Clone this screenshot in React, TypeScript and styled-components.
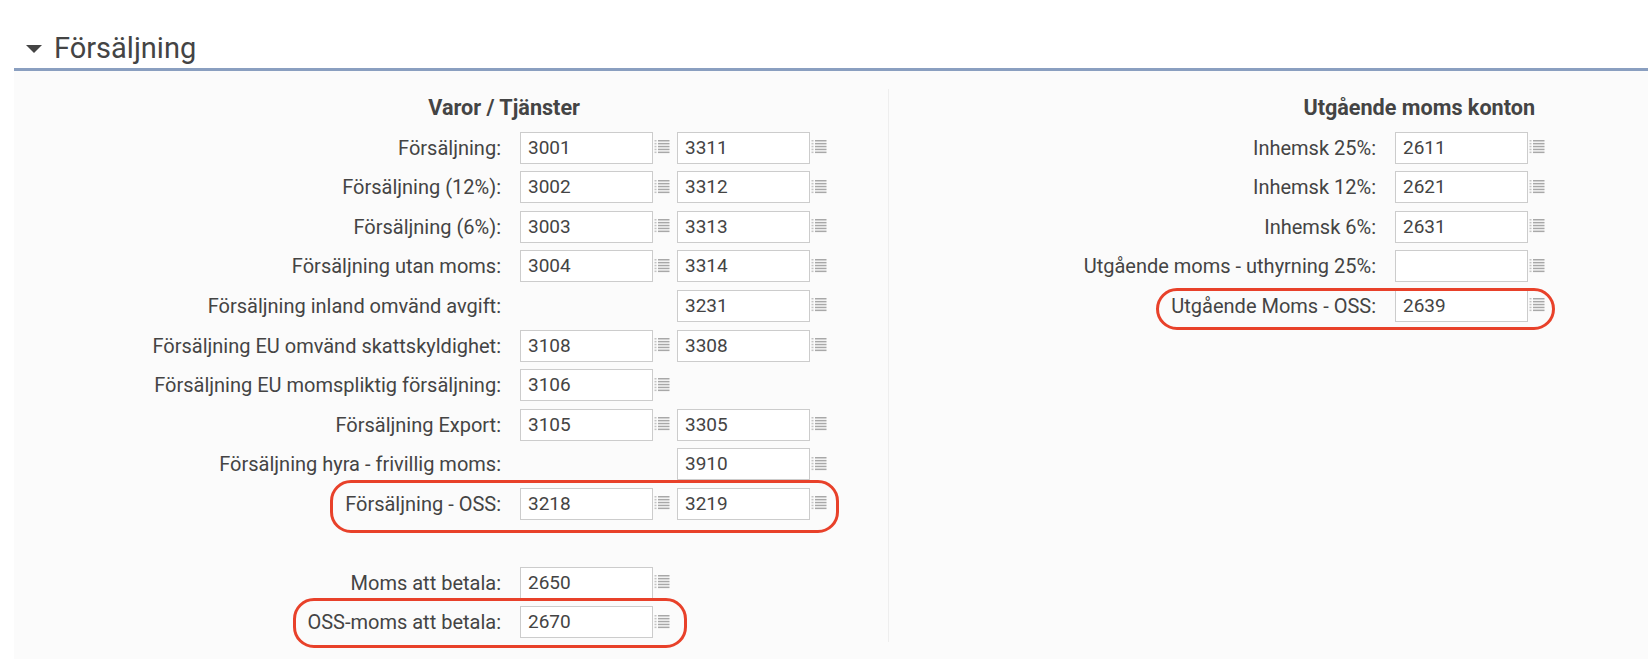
import React from 'react';
import styled, { createGlobalStyle } from 'styled-components';

const Global = createGlobalStyle`
  html, body {
    margin: 0;
    padding: 0;
    background: #fff;
    font-family: Roboto, 'Liberation Sans', sans-serif;
    color: #444;
  }
`;

const Page = styled.div`
  width: 1648px;
  height: 664px;
  padding: 27px 0 0 14px;
  box-sizing: border-box;
  position: relative;
  overflow: hidden;
`;

const SectionHeader = styled.div`
  display: flex;
  align-items: center;
  gap: 12px;
  height: 41px;
  padding-left: 12px;
  border-bottom: 3px solid #8a9fc0;
`;

const Arrow = styled.span`
  width: 0;
  height: 0;
  margin-top: 2px;
  border-left: 8.5px solid transparent;
  border-right: 8.5px solid transparent;
  border-top: 8px solid #444;
`;

const SectionTitle = styled.h2`
  margin: 0;
  font-size: 29px;
  font-weight: 400;
  color: #444;
`;

const Panel = styled.div`
  display: flex;
  height: 588px;
  padding-top: 18px;
  box-sizing: border-box;
  background: #fbfbfb;
`;

const Column = styled.div<{ $width: number; $divider?: boolean }>`
  width: ${(p) => p.$width}px;
  height: 553px;
  flex: none;
  box-sizing: border-box;
  border-right: ${(p) => (p.$divider ? '1px solid #eee' : 'none')};
`;

const Heading = styled.div<{ $right: number }>`
  height: 39px;
  line-height: 37px;
  padding-right: ${(p) => p.$right}px;
  text-align: right;
  font-size: 21.6px;
  font-weight: 700;
  color: #444;
`;

const Row = styled.div<{ $labelWidth: number }>`
  display: grid;
  grid-template-columns: ${(p) => p.$labelWidth}px 157px 157px;
  height: 39.55px;
  align-items: center;
`;

const Label = styled.div`
  padding-right: 19px;
  text-align: right;
  font-size: 20px;
  white-space: nowrap;
  color: #444;
`;

const Field = styled.div`
  display: flex;
  align-items: center;
`;

const Input = styled.div`
  width: 133px;
  height: 32px;
  box-sizing: border-box;
  padding-left: 7px;
  background: #fff;
  border: 1px solid #ccc;
  font-size: 19px;
  line-height: 30px;
  color: #444;
`;

const IconSvg = styled.svg`
  margin: -2px 0 0 1px;
  flex: none;
`;

const ListIcon = () => (
  <IconSvg viewBox="0 0 16 15" width="16" height="15">
    {[1, 3.9, 6.8, 9.7, 12.6].map((y) => (
      <g key={y}>
        <rect x="0.5" y={y} width="2" height="1.5" fill="#c4c4c4" />
        <rect x="4" y={y} width="11.5" height="1.5" fill="#a8a8a8" />
      </g>
    ))}
  </IconSvg>
);

const Highlight = styled.div<{ $x: number; $y: number; $w: number; $h: number }>`
  position: absolute;
  left: ${(p) => p.$x}px;
  top: ${(p) => p.$y}px;
  width: ${(p) => p.$w}px;
  height: ${(p) => p.$h}px;
  box-sizing: border-box;
  border: 3px solid #e8412a;
  border-radius: 21px;
  pointer-events: none;
`;

type RowData = { label: string; a?: string; b?: string };

const Account = ({ value }: { value?: string }) =>
  value === undefined ? (
    <div />
  ) : (
    <Field>
      <Input>{value}</Input>
      <ListIcon />
    </Field>
  );

const leftRows: RowData[] = [
  { label: 'Försäljning:', a: '3001', b: '3311' },
  { label: 'Försäljning (12%):', a: '3002', b: '3312' },
  { label: 'Försäljning (6%):', a: '3003', b: '3313' },
  { label: 'Försäljning utan moms:', a: '3004', b: '3314' },
  { label: 'Försäljning inland omvänd avgift:', b: '3231' },
  { label: 'Försäljning EU omvänd skattskyldighet:', a: '3108', b: '3308' },
  { label: 'Försäljning EU momspliktig försäljning:', a: '3106' },
  { label: 'Försäljning Export:', a: '3105', b: '3305' },
  { label: 'Försäljning hyra - frivillig moms:', b: '3910' },
  { label: 'Försäljning - OSS:', a: '3218', b: '3219' },
  { label: '' },
  { label: 'Moms att betala:', a: '2650' },
  { label: 'OSS-moms att betala:', a: '2670' },
];

const rightRows: RowData[] = [
  { label: 'Inhemsk 25%:', a: '2611' },
  { label: 'Inhemsk 12%:', a: '2621' },
  { label: 'Inhemsk 6%:', a: '2631' },
  { label: 'Utgående moms - uthyrning 25%:', a: '' },
  { label: 'Utgående Moms - OSS:', a: '2639' },
];

export default function App() {
  return (
    <Page>
      <Global />
      <SectionHeader>
        <Arrow />
        <SectionTitle>Försäljning</SectionTitle>
      </SectionHeader>
      <Panel>
        <Column $width={875} $divider>
          <Heading $right={308}>Varor / Tjänster</Heading>
          {leftRows.map((r, i) => (
            <Row key={i} $labelWidth={506}>
              <Label>{r.label}</Label>
              <Account value={r.a} />
              <Account value={r.b} />
            </Row>
          ))}
        </Column>
        <Column $width={759}>
          <Heading $right={113}>Utgående moms konton</Heading>
          {rightRows.map((r, i) => (
            <Row key={i} $labelWidth={506}>
              <Label>{r.label}</Label>
              <Account value={r.a} />
            </Row>
          ))}
        </Column>
      </Panel>
      <Highlight $x={330} $y={480} $w={509} $h={53} />
      <Highlight $x={293} $y={598} $w={394} $h={50} />
      <Highlight $x={1156} $y={288} $w={399} $h={42} />
    </Page>
  );
}
